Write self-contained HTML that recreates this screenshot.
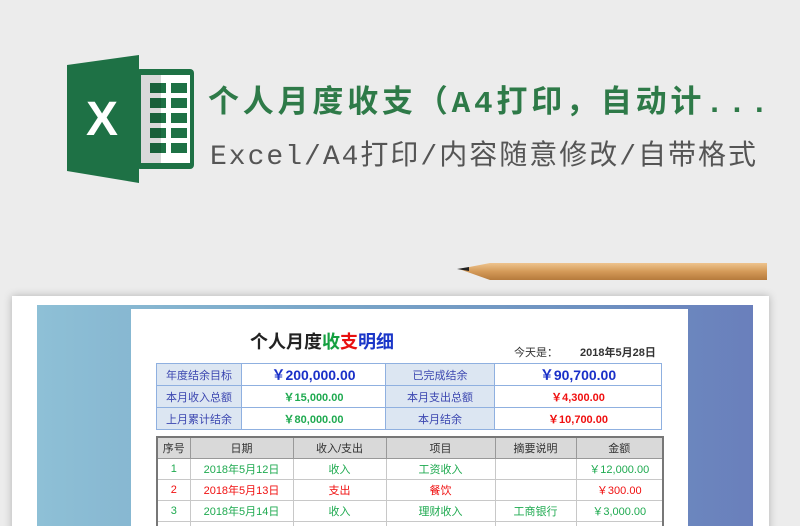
<!DOCTYPE html>
<html style="width:800px;height:526px;overflow:hidden"><head><meta charset="utf-8"><style>
body{margin:0;width:800px;height:526px;overflow:hidden;background:#ececec;font-family:"Liberation Sans","Noto Sans CJK SC",sans-serif;position:relative}
.abs{position:absolute}
table{border-collapse:collapse;position:absolute;font-size:11px;text-align:center;table-layout:fixed}
.s td{border:1px solid #8fb0e0;height:21px;padding:0}
.s .l{background:#dce6f2;color:#3b46b0}
.d td{border:1px solid #c8c8c8;height:20px;padding:0}
.d tr.h td{background:#d9d9d9;color:#333;border-color:#999}
.g{color:#1faa50}.r{color:#f01010}
</style></head><body>
<svg class="abs" style="left:62px;top:55px" width="135" height="130" viewBox="0 0 135 130">
<rect x="74" y="14" width="58" height="100" rx="4" fill="#1e7145"/>
<rect x="79" y="20" width="49" height="88" fill="#fff"/>
<g fill="#1e7145">
<rect x="88" y="28" width="16" height="10"/><rect x="109" y="28" width="16" height="10"/>
<rect x="88" y="43" width="16" height="10"/><rect x="109" y="43" width="16" height="10"/>
<rect x="88" y="58" width="16" height="10"/><rect x="109" y="58" width="16" height="10"/>
<rect x="88" y="73" width="16" height="10"/><rect x="109" y="73" width="16" height="10"/>
<rect x="88" y="88" width="16" height="10"/><rect x="109" y="88" width="16" height="10"/>
</g>
<rect x="79" y="20" width="20" height="88" fill="#000" opacity=".15"/>
<polygon points="5,10 77,0 77,128 5,116" fill="#1e7145"/>
<text x="40" y="80" font-family="Liberation Sans" font-weight="bold" font-size="48" fill="#fff" text-anchor="middle">X</text>
</svg>
<div class="abs" style="left:208px;top:76px;font-size:31px;font-weight:bold;color:#2e7a48;letter-spacing:3.8px;white-space:nowrap;font-family:'Liberation Mono','Noto Sans CJK SC',monospace">个人月度收支（A4打印，自动计...</div>
<div class="abs" style="left:210px;top:133px;font-size:28px;color:#555;letter-spacing:2px;white-space:nowrap;font-family:'Liberation Mono','Noto Sans CJK SC',monospace">Excel/A4打印/内容随意修改/自带格式</div>
<svg class="abs" style="left:455px;top:258px" width="315" height="28">
<defs><linearGradient id="p" x1="0" y1="0" x2="0" y2="1"><stop offset="0" stop-color="#eec48e"/><stop offset=".5" stop-color="#d49a58"/><stop offset="1" stop-color="#b57a3c"/></linearGradient></defs>
<polygon points="4,11 35,5 312,5 312,22 35,22" fill="url(#p)"/>
<polygon points="2,11 14,9 14,13" fill="#222"/>
</svg>
<div class="abs" style="left:12px;top:296px;width:757px;height:240px;background:#fff;box-shadow:0 0 8px rgba(0,0,0,.25)"></div>
<div class="abs" style="left:37px;top:305px;width:716px;height:230px;background:linear-gradient(90deg,#8ec0d6,#79a6c8 40%,#6d8fc0 80%,#6a7fbc)"></div>
<div class="abs" style="left:131px;top:309px;width:557px;height:230px;background:#fff"></div>
<div class="abs" style="left:250px;top:328px;font-size:18px;font-weight:bold;color:#222">个人月度<span style="color:#14a040">收</span><span style="color:#e81010">支</span><span style="color:#1a36c8">明细</span></div>
<div class="abs" style="left:514px;top:344px;font-size:11px;color:#333">今天是：</div>
<div class="abs" style="left:580px;top:344px;font-size:11px;color:#333;font-weight:bold">2018年5月28日</div>
<table class="s" style="left:156px;top:363px;width:505px">
<col style="width:85px"><col style="width:144px"><col style="width:109px"><col style="width:167px">
<tr><td class="l">年度结余目标</td><td style="color:#1a30c8;font-weight:bold;font-size:14px">￥200,000.00</td><td class="l">已完成结余</td><td style="color:#1a30c8;font-weight:bold;font-size:14px">￥90,700.00</td></tr>
<tr><td class="l">本月收入总额</td><td class="g" style="font-weight:bold">￥15,000.00</td><td class="l">本月支出总额</td><td class="r" style="font-weight:bold">￥4,300.00</td></tr>
<tr><td class="l">上月累计结余</td><td class="g" style="font-weight:bold">￥80,000.00</td><td class="l">本月结余</td><td class="r" style="font-weight:bold">￥10,700.00</td></tr>
</table>
<table class="d" style="left:156px;top:436px;width:506px;border:2px solid #777">
<col style="width:33px"><col style="width:103px"><col style="width:93px"><col style="width:109px"><col style="width:81px"><col style="width:87px">
<tr class="h"><td>序号</td><td>日期</td><td>收入/支出</td><td>项目</td><td>摘要说明</td><td>金额</td></tr>
<tr class="g"><td>1</td><td>2018年5月12日</td><td>收入</td><td>工资收入</td><td></td><td>￥12,000.00</td></tr>
<tr class="r"><td>2</td><td>2018年5月13日</td><td>支出</td><td>餐饮</td><td></td><td>￥300.00</td></tr>
<tr class="g"><td>3</td><td>2018年5月14日</td><td>收入</td><td>理财收入</td><td>工商银行</td><td>￥3,000.00</td></tr>
<tr><td></td><td></td><td></td><td></td><td></td><td></td></tr>
</table>
</body></html>
